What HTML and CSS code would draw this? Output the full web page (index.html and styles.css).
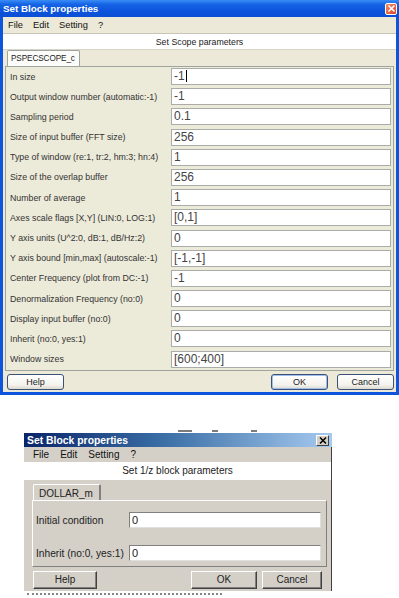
FILE: index.html
```html
<!DOCTYPE html>
<html>
<head>
<meta charset="utf-8">
<link rel="stylesheet" href="styles.css">
</head>
<body>
<div class="xp">
  <div class="xp-title">
    <span class="xp-title-text">Set Block properties</span>
    <span class="xp-close"><svg width="9" height="9" viewBox="0 0 9 9"><path d="M1.5 1.5 L7.5 7.5 M7.5 1.5 L1.5 7.5" stroke="#fff" stroke-width="1.6"/></svg></span>
  </div>
  <div class="xp-body">
    <div class="menu xp-menu"><span>File</span><span>Edit</span><span>Setting</span><span>?</span></div>
    <div class="band xp-band">Set Scope parameters</div>
    <div class="tabs xp-tabs"><span class="tab xp-tab">PSPECSCOPE_c</span></div>
    <div class="panel xp-panel">
      <div class="row"><span>In size</span><div class="inp">-1<i class="caret"></i></div></div>
      <div class="row"><span>Output window number (automatic:-1)</span><div class="inp">-1</div></div>
      <div class="row"><span>Sampling period</span><div class="inp">0.1</div></div>
      <div class="row"><span>Size of input buffer (FFT size)</span><div class="inp">256</div></div>
      <div class="row"><span>Type of window (re:1, tr:2, hm:3; hn:4)</span><div class="inp">1</div></div>
      <div class="row"><span>Size of the overlap buffer</span><div class="inp">256</div></div>
      <div class="row"><span>Number of average</span><div class="inp">1</div></div>
      <div class="row"><span>Axes scale flags [X,Y] (LIN:0, LOG:1)</span><div class="inp">[0,1]</div></div>
      <div class="row"><span>Y axis units (U^2:0, dB:1, dB/Hz:2)</span><div class="inp">0</div></div>
      <div class="row"><span>Y axis bound [min,max] (autoscale:-1)</span><div class="inp">[-1,-1]</div></div>
      <div class="row"><span>Center Frequency (plot from DC:-1)</span><div class="inp">-1</div></div>
      <div class="row"><span>Denormalization Frequency (no:0)</span><div class="inp">0</div></div>
      <div class="row"><span>Display input buffer (no:0)</span><div class="inp">0</div></div>
      <div class="row"><span>Inherit (no:0, yes:1)</span><div class="inp">0</div></div>
      <div class="row"><span>Window sizes</span><div class="inp">[600;400]</div></div>
    </div>
    <div class="buttons xp-buttons">
      <span class="btn xp-btn help">Help</span>
      <span class="spacer"></span>
      <span class="btn xp-btn ok">OK</span>
      <span class="btn xp-btn">Cancel</span>
    </div>
  </div>
</div>

<div class="gap"><span class="mark m1"></span><span class="mark m2"></span><span class="mark m3"></span></div>

<div class="cl">
  <div class="cl-title">
    <span class="cl-title-text">Set Block properties</span>
    <span class="cl-close"><svg width="8" height="7" viewBox="0 0 8 7"><path d="M1 0.5 L7 6.5 M7 0.5 L1 6.5" stroke="#000" stroke-width="1.5"/></svg></span>
  </div>
  <div class="cl-body">
    <div class="menu cl-menu"><span>File</span><span>Edit</span><span>Setting</span><span>?</span></div>
    <div class="band cl-band">Set 1/z block parameters</div>
    <div class="tabs cl-tabs"><span class="tab cl-tab">DOLLAR_m</span></div>
    <div class="panel cl-panel">
      <div class="crow"><span>Initial condition</span><div class="cinp">0</div></div>
      <div class="crow"><span>Inherit (no:0, yes:1)</span><div class="cinp">0</div></div>
    </div>
    <div class="buttons cl-buttons">
      <span class="btn cl-btn chelp">Help</span>
      <span class="spacer"></span>
      <span class="btn cl-btn cok">OK</span>
      <span class="btn cl-btn ccancel">Cancel</span>
    </div>
  </div>
</div>
<div class="below"></div>
</body>
</html>
```
FILE: styles.css
```css
* { box-sizing: border-box; }
html, body { margin: 0; padding: 0; background: #fff; }
body {
  width: 399px;
  height: 598px;
  overflow: hidden;
  font-family: "Liberation Sans", Arial, sans-serif;
  font-size: 10px;
  color: #222;
}

/* ---------- XP dialog ---------- */
.xp { width: 399px; }
.xp-title {
  height: 17px;
  background: linear-gradient(#3a8cf5 0%, #1664e6 25%, #0d55dc 60%, #0a4fd6 100%);
  display: flex;
  align-items: center;
  padding: 0 2px 0 3px;
}
.xp-title-text {
  flex: 1;
  color: #fff;
  font-weight: bold;
  font-size: 9.8px;
}
.xp-close {
  width: 12px; height: 12px;
  border: 1px solid #fff;
  border-radius: 2px;
  background: linear-gradient(135deg, #f08a6a, #d8462a);
  display: flex; align-items: center; justify-content: center;
}
.xp-body {
  background: #ece9d8;
  border-left: 3px solid #0d55dc;
  border-right: 3px solid #0d55dc;
  border-bottom: 3px solid #0d55dc;
  height: 378px;
}
.menu {
  display: flex;
  align-items: center;
  color: #111;
}
.xp-menu { height: 16px; padding-left: 5px; gap: 10px; font-size: 9.3px; }
.band {
  background: #fff;
  text-align: center;
  color: #222;
}
.xp-band {
  height: 17px;
  line-height: 16px;
  font-size: 8.8px;
  border-top: 1px solid #c8c5b8;
  border-bottom: 1px solid #d8d5c8;
}
.tabs { display: flex; }
.xp-tabs { padding-left: 4px; height: 16px; align-items: flex-end; }
.tab {
  background: #fcfcfa;
  border: 1px solid #9ea59f;
  border-bottom: none;
  border-radius: 2px 2px 0 0;
  color: #222;
  white-space: nowrap;
}
.xp-tab { height: 16px; padding: 3px 4px 0 3px; font-size: 8.2px; letter-spacing: -0.1px; }
.panel {
  border: 1px solid #9ea59f;
}
.xp-panel {
  margin: 0 0 0 2px;
  width: 389px;
  height: 305px;
  padding: 1px 2px 0 4px;
  display: flex;
  flex-direction: column;
  gap: 3.2px;
  background: #ecead9;
}
.row {
  display: flex;
  align-items: center;
  height: 17px;
}
.row > span {
  width: 161px;
  white-space: nowrap;
  font-size: 8.8px;
  color: #333;
}
.inp {
  flex: 1;
  height: 17px;
  background: #fff;
  border: 1px solid #a9aca8;
  font-size: 12px;
  line-height: 15px;
  padding-left: 2px;
  color: #444;
  position: relative;
}
.caret {
  display: inline-block;
  width: 1px; height: 12px;
  background: #000;
  vertical-align: -2px;
  margin-left: 1px;
}
.buttons { display: flex; align-items: center; }
.spacer { flex: 1; }
.xp-buttons { height: 20px; padding: 2px 0 0 4px; gap: 9px; }
.btn {
  display: flex; align-items: center; justify-content: center;
  color: #222;
}
.xp-btn {
  width: 57px; height: 16px;
  font-size: 9px;
  border: 1px solid #3c5177;
  border-radius: 3px;
  background: linear-gradient(#fff, #f4f3ee 70%, #dcd9cf);
}
.xp-btn.ok { box-shadow: inset 0 0 0 1px #9fbeea; }
.xp-btn:last-child { margin-right: 2px; }

/* ---------- gap ---------- */
.gap { height: 38px; position: relative; }
.mark { position: absolute; top: 35px; height: 2px; background: #444; opacity: 0.7; }
.m1 { left: 178px; width: 14px; }
.m2 { left: 212px; width: 6px; }
.m3 { left: 251px; width: 6px; }

/* ---------- classic dialog ---------- */
.cl { margin-left: 24px; width: 308px; }
.cl-title {
  height: 14px;
  background: linear-gradient(90deg, #0a246a 0%, #3a6ea5 45%, #a6caf0 100%);
  display: flex; align-items: center;
  padding: 0 3px 0 3px;
}
.cl-title-text { flex: 1; color: #fff; font-weight: bold; font-size: 10.4px; }
.cl-close {
  width: 13px; height: 11px;
  background: #d4d0c8;
  border: 1px solid;
  border-color: #fff #404040 #404040 #fff;
  display: flex; align-items: center; justify-content: center;
}
.cl-body {
  background: #d4d0c8;
  border-right: 1px solid #404040;
  height: 144px;
}
.cl-menu { height: 15px; padding-left: 9px; gap: 11px; font-size: 10px; }
.cl-band { height: 18px; line-height: 18px; font-size: 10px; }
.cl-tabs { padding: 4px 0 0 9px; height: 20px; align-items: flex-end; }
.cl-tab {
  height: 16px; padding: 3px 6px 0 5px;
  font-size: 10px;
  background: #d4d0c8;
  border-color: #fff #808080 #808080 #fff;
  border-width: 1px 2px 0 1px;
}
.cl-panel {
  margin-left: 8px;
  width: 295px;
  height: 67px;
  border-color: #fff #808080 #808080 #fff;
  padding: 11px 5px 0 3px;
  display: flex; flex-direction: column; gap: 17px;
}
.crow { display: flex; align-items: center; height: 16px; }
.crow > span { width: 93px; font-size: 10.2px; color: #222; white-space: nowrap; }
.cinp {
  flex: 1; height: 16px;
  background: #fff;
  border: 1px solid;
  border-color: #808080 #e0e0e0 #e0e0e0 #808080;
  font-size: 11px; line-height: 14px; padding-left: 2px;
}
.cl-buttons { height: 22px; padding: 3px 9px 0 9px; }
.cl-btn {
  height: 18px;
  font-size: 10px;
  background: #d4d0c8;
  border: 1px solid;
  border-color: #fff #404040 #404040 #fff;
  box-shadow: inset -1px -1px 0 #808080;
}
.chelp { width: 64px; }
.cok { width: 66px; margin-right: 5px; }
.ccancel { width: 60px; }
.below {
  margin: 2px 0 0 27px;
  width: 195px;
  height: 2px;
  border-top: 2px dotted #555;
  opacity: 0.7;
}
```
